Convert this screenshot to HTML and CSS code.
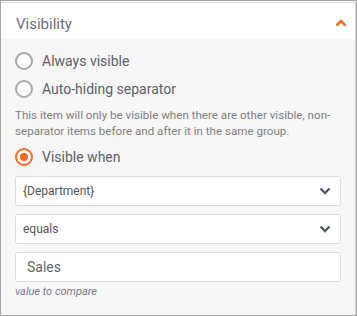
FILE: index.html
```html
<!DOCTYPE html>
<html>
<head>
  <title>Visibility</title>
  <link rel="stylesheet" href="styles.css">
</head>
<body>

  <div class="frame">
    <div class="panel">
      <div class="panel-header">
        <span class="panel-title">Visibility</span>
        <svg class="collapse" width="12" height="8" viewBox="0 0 12 8">
          <path d="M1.5 6.5 L6 2 L10.5 6.5" fill="none" stroke="#f26b21" stroke-width="2.6"/>
        </svg>
      </div>

      <div class="panel-body">
        <label class="radio">
          <span class="dot"></span>
          <span>Always visible</span>
        </label>
        <label class="radio">
          <span class="dot"></span>
          <span>Auto-hiding separator</span>
        </label>
        <p class="hint">This item will only be visible when there are other visible, non-separator items before and after it in the same group.</p>
        <label class="radio">
          <span class="dot checked"></span>
          <span>Visible when</span>
        </label>

        <div class="select first">
          <span>{Department}</span>
          <svg width="12" height="8" viewBox="0 0 12 8">
            <path d="M1.5 1.5 L6 6 L10.5 1.5" fill="none" stroke="#555a66" stroke-width="2.4"/>
          </svg>
        </div>
        <div class="select">
          <span>equals</span>
          <svg width="12" height="8" viewBox="0 0 12 8">
            <path d="M1.5 1.5 L6 6 L10.5 1.5" fill="none" stroke="#555a66" stroke-width="2.4"/>
          </svg>
        </div>
        <div class="textbox">Sales</div>
        <div class="caption">value to compare</div>
      </div>
    </div>
  </div>

</body>
</html>
```

FILE: styles.css
```css
body {
  margin: 0;
  font-family: Roboto, "Liberation Sans", sans-serif;
}

.frame {
  width: 355px;
  height: 314px;
  border: 1px solid #a4a4a4;
  background: #fff;
}

.panel {
  margin-top: 1px;
  height: 313px;
  border-top: 1px solid #d8d8d8;
  border-right: 1px solid #d8d8d8;
  background: #f7f7f7;
  box-sizing: border-box;
}

.panel-header {
  height: 36px;
  background: #fff;
  display: flex;
  align-items: center;
  justify-content: space-between;
  padding: 0 8px 0 15px;
}

.panel-title {
  font-size: 15px;
  color: #6e6e82;
  margin-top: 5px;
}

.collapse {
  margin-top: 3px;
}

.panel-body {
  padding: 8px 14px 0 14px;
}

.radio {
  display: flex;
  align-items: center;
  gap: 9px;
  height: 28px;
  font-size: 14px;
  color: #606068;
}

.dot {
  width: 14px;
  height: 14px;
  border: 2px solid #a8a8a8;
  border-radius: 50%;
  background: #fff;
  flex: none;
}

.dot.checked {
  border-color: #f26b21;
  position: relative;
}

.dot.checked::after {
  content: "";
  position: absolute;
  left: 3px;
  top: 3px;
  width: 8px;
  height: 8px;
  border-radius: 50%;
  background: #f26b21;
}

.hint {
  margin: 4px 0 4px 0;
  font-size: 11.6px;
  line-height: 16px;
  color: #808080;
}

.select,
.textbox {
  height: 30px;
  box-sizing: border-box;
  background: #fff;
  border: 1px solid #dcdcdc;
  border-radius: 3px;
  display: flex;
  align-items: center;
  justify-content: space-between;
  padding: 0 9px 0 7px;
  margin-top: 8px;
  font-size: 12px;
  color: #555;
}

.select.first {
  margin-top: 5px;
}

.textbox {
  padding-left: 11px;
  font-size: 14px;
  color: #666;
}

.caption {
  margin-top: 3px;
  font-size: 11px;
  font-style: italic;
  color: #7b7b8a;
}
```
